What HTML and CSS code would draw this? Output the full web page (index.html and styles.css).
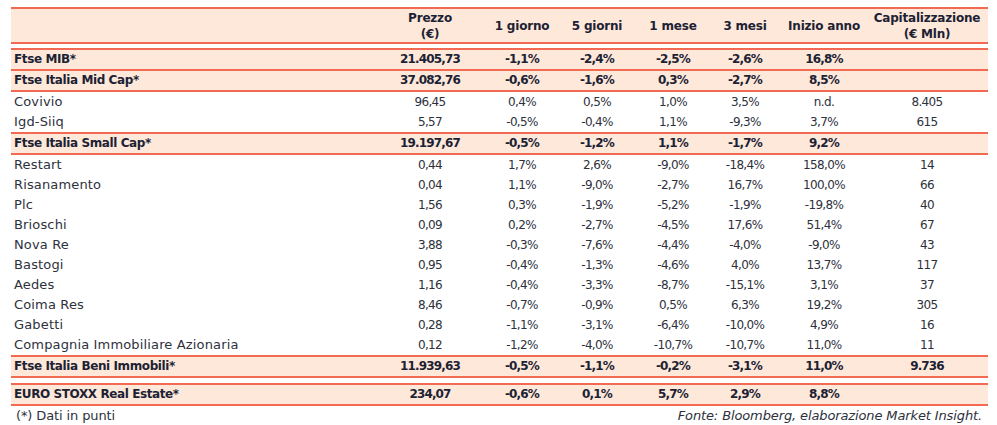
FILE: index.html
```html
<!DOCTYPE html>
<html lang="it">
<head>
<meta charset="utf-8">
<title>Performance titoli immobiliari</title>
<link rel="stylesheet" href="styles.css">
</head>
<body>
<div class="wrap">
<table class="perf">
  <colgroup>
    <col class="c-name"><col class="c-price"><col class="c-1g"><col class="c-5g"><col class="c-1m"><col class="c-3m"><col class="c-ya"><col class="c-cap">
  </colgroup>
  <thead>
    <tr class="head">
      <th></th>
      <th>Prezzo<br>(€)</th>
      <th>1 giorno</th>
      <th>5 giorni</th>
      <th>1 mese</th>
      <th>3 mesi</th>
      <th>Inizio anno</th>
      <th>Capitalizzazione<br>(€ Mln)</th>
    </tr>
  </thead>
  <tbody>
    <tr class="spacer"><td colspan="8"></td></tr>
    <tr class="idx tb"><td>Ftse MIB*</td><td>21.405,73</td><td>-1,1%</td><td>-2,4%</td><td>-2,5%</td><td>-2,6%</td><td>16,8%</td><td></td></tr>
    <tr class="idx b"><td>Ftse Italia Mid Cap*</td><td>37.082,76</td><td>-0,6%</td><td>-1,6%</td><td>0,3%</td><td>-2,7%</td><td>8,5%</td><td></td></tr>
    <tr><td>Covivio</td><td>96,45</td><td>0,4%</td><td>0,5%</td><td>1,0%</td><td>3,5%</td><td>n.d.</td><td>8.405</td></tr>
    <tr><td>Igd-Siiq</td><td>5,57</td><td>-0,5%</td><td>-0,4%</td><td>1,1%</td><td>-9,3%</td><td>3,7%</td><td>615</td></tr>
    <tr class="idx tb"><td>Ftse Italia Small Cap*</td><td>19.197,67</td><td>-0,5%</td><td>-1,2%</td><td>1,1%</td><td>-1,7%</td><td>9,2%</td><td></td></tr>
    <tr><td>Restart</td><td>0,44</td><td>1,7%</td><td>2,6%</td><td>-9,0%</td><td>-18,4%</td><td>158,0%</td><td>14</td></tr>
    <tr><td>Risanamento</td><td>0,04</td><td>1,1%</td><td>-9,0%</td><td>-2,7%</td><td>16,7%</td><td>100,0%</td><td>66</td></tr>
    <tr><td>Plc</td><td>1,56</td><td>0,3%</td><td>-1,9%</td><td>-5,2%</td><td>-1,9%</td><td>-19,8%</td><td>40</td></tr>
    <tr><td>Brioschi</td><td>0,09</td><td>0,2%</td><td>-2,7%</td><td>-4,5%</td><td>17,6%</td><td>51,4%</td><td>67</td></tr>
    <tr><td>Nova Re</td><td>3,88</td><td>-0,3%</td><td>-7,6%</td><td>-4,4%</td><td>-4,0%</td><td>-9,0%</td><td>43</td></tr>
    <tr><td>Bastogi</td><td>0,95</td><td>-0,4%</td><td>-1,3%</td><td>-4,6%</td><td>4,0%</td><td>13,7%</td><td>117</td></tr>
    <tr><td>Aedes</td><td>1,16</td><td>-0,4%</td><td>-3,3%</td><td>-8,7%</td><td>-15,1%</td><td>3,1%</td><td>37</td></tr>
    <tr><td>Coima Res</td><td>8,46</td><td>-0,7%</td><td>-0,9%</td><td>0,5%</td><td>6,3%</td><td>19,2%</td><td>305</td></tr>
    <tr><td>Gabetti</td><td>0,28</td><td>-1,1%</td><td>-3,1%</td><td>-6,4%</td><td>-10,0%</td><td>4,9%</td><td>16</td></tr>
    <tr><td>Compagnia Immobiliare Azionaria</td><td>0,12</td><td>-1,2%</td><td>-4,0%</td><td>-10,7%</td><td>-10,7%</td><td>11,0%</td><td>11</td></tr>
    <tr class="idx tb"><td>Ftse Italia Beni Immobili*</td><td>11.939,63</td><td>-0,5%</td><td>-1,1%</td><td>-0,2%</td><td>-3,1%</td><td>11,0%</td><td>9.736</td></tr>
    <tr class="spacer s2"><td colspan="8"></td></tr>
    <tr class="idx tb"><td>EURO STOXX Real Estate*</td><td>234,07</td><td>-0,6%</td><td>0,1%</td><td>5,7%</td><td>2,9%</td><td>8,8%</td><td></td></tr>
  </tbody>
</table>
<div class="foot">
  <span class="note">(*) Dati in punti</span>
  <span class="src">Fonte: Bloomberg, elaborazione Market Insight.</span>
</div>
</div>
</body>
</html>
```

FILE: styles.css
```css
html, body {
  margin: 0;
  padding: 0;
  background: #ffffff;
}

.wrap {
  width: 977px;
  margin: 7px 0 0 11px;
  font-family: "DejaVu Sans", "Liberation Sans", sans-serif;
  font-size: 12px;
  color: #2e313c;
}

.perf {
  width: 977px;
  table-layout: fixed;
  border-collapse: separate;
  border-spacing: 0;
}

.c-name { width: 361px; }
.c-price { width: 116px; }
.c-1g { width: 68px; }
.c-5g { width: 82px; }
.c-1m { width: 70px; }
.c-3m { width: 74px; }
.c-ya { width: 84px; }
.c-cap { width: 122px; }

.perf th,
.perf td {
  padding: 0;
  text-align: center;
  white-space: nowrap;
}

.perf td {
  height: 20px;
  line-height: 20px;
  letter-spacing: -0.65px;
}

.perf td:first-child {
  text-align: left;
  padding-left: 3px;
  font-size: 13px;
  letter-spacing: 0.15px;
}

.head th {
  background: #fde8da;
  border-top: 2px solid #f26a52;
  border-bottom: 2px solid #f26a52;
  height: 33px;
  line-height: 16px;
  font-weight: bold;
  color: #1c2233;
  vertical-align: middle;
  letter-spacing: -0.2px;
}

.spacer td {
  height: 4px;
  line-height: 0;
}

.spacer.s2 td {
  height: 5px;
}

.idx td {
  background: #fde8da;
  font-weight: bold;
  color: #1c2233;
  height: 19px;
  line-height: 19px;
  letter-spacing: -0.85px;
}

.perf .idx td:first-child {
  font-size: 12px;
  letter-spacing: -0.4px;
}

.idx.tb td {
  border-top: 2px solid #f26a52;
  border-bottom: 2px solid #f26a52;
}

.idx.b td {
  border-bottom: 2px solid #f26a52;
}

.foot {
  display: flex;
  justify-content: space-between;
  padding: 2px 6px 0 5px;
  line-height: 16px;
  font-size: 13px;
  letter-spacing: -0.12px;
}

.src {
  font-style: italic;
}
```
